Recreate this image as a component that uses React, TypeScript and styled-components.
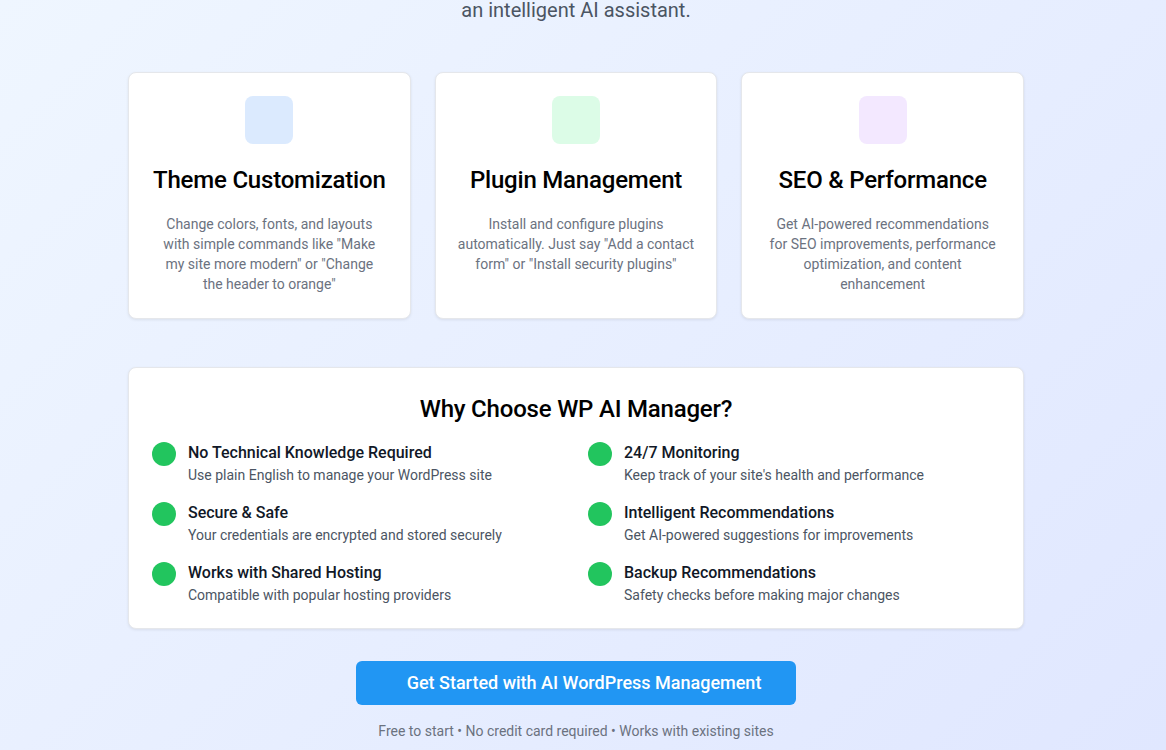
import styled, { createGlobalStyle } from 'styled-components'

type Feature = {
  title: string
  lines: string[]
  tint: string
}

type Benefit = {
  title: string
  text: string
}

// copy is broken by hand so the wraps match the design
const features: Feature[] = [
  {
    title: 'Theme Customization',
    lines: ['Change colors, fonts, and layouts', 'with simple commands like "Make', 'my site more modern" or "Change', 'the header to orange"'],
    tint: '#dbeafe',
  },
  {
    title: 'Plugin Management',
    lines: ['Install and configure plugins', 'automatically. Just say "Add a contact', 'form" or "Install security plugins"'],
    tint: '#dcfce7',
  },
  {
    title: 'SEO & Performance',
    lines: ['Get AI-powered recommendations', 'for SEO improvements, performance', 'optimization, and content', 'enhancement'],
    tint: '#f3e8ff',
  },
]

const benefits: Benefit[] = [
  { title: 'No Technical Knowledge Required', text: 'Use plain English to manage your WordPress site' },
  { title: '24/7 Monitoring', text: "Keep track of your site's health and performance" },
  { title: 'Secure & Safe', text: 'Your credentials are encrypted and stored securely' },
  { title: 'Intelligent Recommendations', text: 'Get AI-powered suggestions for improvements' },
  { title: 'Works with Shared Hosting', text: 'Compatible with popular hosting providers' },
  { title: 'Backup Recommendations', text: 'Safety checks before making major changes' },
]

const GlobalStyle = createGlobalStyle`
  * {
    box-sizing: border-box;
  }
  html, body {
    margin: 0;
    padding: 0;
    height: 100%;
    overflow: hidden;
  }
  body {
    font-family: Roboto, 'Noto Sans', sans-serif;
    background: linear-gradient(135deg, #eff6ff 0%, #e0e7ff 100%);
    color: #111827;
  }
`

const App = () => {
  return (
    <Page>
      <GlobalStyle />
      <Content>
        <Lead>an intelligent AI assistant.</Lead>

        <CardGrid>
          {features.map((f) => (
            <Card key={f.title}>
              <IconBox tint={f.tint} />
              <CardTitle>{f.title}</CardTitle>
              <CardText>
                {f.lines.map((line) => (
                  <span key={line}>{line}</span>
                ))}
              </CardText>
            </Card>
          ))}
        </CardGrid>

        <WhyPanel>
          <WhyTitle>Why Choose WP AI Manager?</WhyTitle>
          <BenefitGrid>
            {benefits.map((b) => (
              <BenefitRow key={b.title}>
                <Dot />
                <div>
                  <BenefitTitle>{b.title}</BenefitTitle>
                  <BenefitText>{b.text}</BenefitText>
                </div>
              </BenefitRow>
            ))}
          </BenefitGrid>
        </WhyPanel>

        <CtaWrap>
          <CtaButton type="button">Get Started with AI WordPress Management</CtaButton>
          <Fineprint>Free to start • No credit card required • Works with existing sites</Fineprint>
        </CtaWrap>
      </Content>
    </Page>
  )
}

const Page = styled.div`
  width: calc(100% - 14px);
`

const Content = styled.main`
  max-width: 896px;
  margin: 0 auto;
`

const Lead = styled.p`
  margin: -4px 0 0;
  text-align: center;
  font-size: 20px;
  line-height: 28px;
  color: #4b5563;
`

const CardGrid = styled.div`
  margin-top: 48px;
  display: grid;
  grid-template-columns: repeat(3, 1fr);
  gap: 24px;
`

const Card = styled.div`
  background: #fff;
  border-radius: 8px;
  border: 1px solid #e5e7eb;
  box-shadow: 0 1px 3px rgba(0, 0, 0, 0.08);
  padding: 23px 16px 24px;
  display: flex;
  flex-direction: column;
  align-items: center;
  text-align: center;
`

const IconBox = styled.div<{ tint: string }>`
  width: 48px;
  height: 48px;
  border-radius: 8px;
  background: ${({ tint }) => tint};
`

const CardTitle = styled.h3`
  margin: 20px 0 0;
  font-size: 24px;
  line-height: 32px;
  font-weight: 500;
  color: #000;
  letter-spacing: -0.2px;
  white-space: nowrap;
`

const CardText = styled.p`
  margin: 18px 0 0;
  display: flex;
  flex-direction: column;
  align-items: center;
  font-size: 14px;
  line-height: 20px;
  color: #6b7280;
  white-space: nowrap;
`

const WhyPanel = styled.section`
  margin-top: 48px;
  background: #fff;
  border-radius: 8px;
  border: 1px solid #e5e7eb;
  box-shadow: 0 1px 3px rgba(0, 0, 0, 0.08);
  padding: 25px 23px 23px;
`

const WhyTitle = styled.h2`
  margin: 0 0 16px;
  text-align: center;
  font-size: 24px;
  line-height: 32px;
  font-weight: 500;
  color: #000;
  letter-spacing: -0.2px;
`

const BenefitGrid = styled.div`
  display: grid;
  grid-template-columns: 1fr 1fr;
  column-gap: 24px;
  row-gap: 16px;
`

const BenefitRow = styled.div`
  display: flex;
  align-items: flex-start;
  gap: 12px;
`

const Dot = styled.span`
  flex: none;
  width: 24px;
  height: 24px;
  margin-top: 1px;
  border-radius: 50%;
  background: #22c55e;
`

const BenefitTitle = styled.div`
  font-size: 16px;
  line-height: 24px;
  font-weight: 500;
  color: #111827;
`

const BenefitText = styled.div`
  font-size: 14px;
  line-height: 20px;
  color: #4b5563;
`

const CtaWrap = styled.div`
  margin-top: 32px;
  display: flex;
  flex-direction: column;
  align-items: center;
`

const CtaButton = styled.button`
  font-family: inherit;
  border: none;
  border-radius: 6px;
  background: #2196f3;
  color: #fff;
  font-size: 18px;
  line-height: 28px;
  font-weight: 500;
  padding: 8px 35px 8px 51px;
  cursor: pointer;
`

const Fineprint = styled.p`
  margin: 16px 0 0;
  font-size: 14px;
  line-height: 20px;
  color: #6b7280;
`

export default App
